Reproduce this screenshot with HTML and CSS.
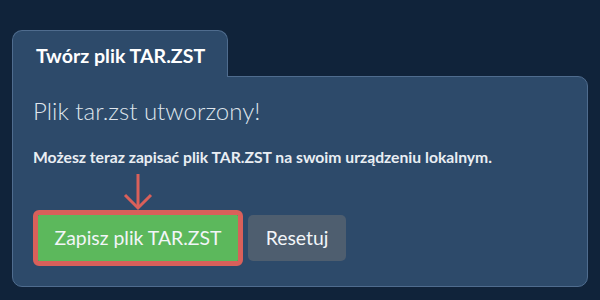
FILE: index.html
```html
<!DOCTYPE html>
<html lang="pl">
<head>
    <meta charset="UTF-8">
    <meta name="viewport" content="width=device-width, initial-scale=1.0">
    <title>Twórz plik TAR.ZST</title>
    <link rel="stylesheet" href="styles.css">
</head>
<body>
    <div class="tab">Twórz plik TAR.ZST</div>
    <div class="panel">
        <h2 class="panel-title">Plik tar.zst utworzony!</h2>
        <p class="panel-text">Możesz teraz zapisać plik TAR.ZST na swoim urządzeniu lokalnym.</p>
        <div class="button-row">
            <div class="highlight">
                <svg class="arrow" width="30" height="37" viewBox="0 0 30 37">
                    <line x1="15" y1="0" x2="15" y2="34" />
                    <polyline points="2,21 15,34 28,21" />
                </svg>
                <button class="btn btn-save">Zapisz plik TAR.ZST</button>
            </div>
            <button class="btn btn-reset">Resetuj</button>
        </div>
    </div>
</body>
</html>
```

FILE: styles.css
```css
body {
    margin: 0;
    padding: 30px 12px 0 12px;
    background-color: #10233a;
    font-family: Lato, "Noto Sans", sans-serif;
    color: #e6ebf1;
}
.tab {
    position: relative;
    z-index: 1;
    box-sizing: border-box;
    width: 216px;
    height: 47px;
    margin-bottom: -1px;
    padding: 13px 0 0 23px;
    background-color: #2d4a6a;
    border: 1px solid #4f6c8e;
    border-bottom: none;
    border-radius: 10px 10px 0 0;
    color: #ffffff;
    font-size: 19.6px;
    font-weight: bold;
    line-height: 1.2;
}
.panel {
    padding: 20px;
    background-color: #2d4a6a;
    border: 1px solid #4f6c8e;
    border-radius: 0 10px 10px 10px;
}
.panel-title {
    margin: 0 0 22px 0;
    font-size: 24px;
    font-weight: 300;
    line-height: 1.2;
    color: #dfe5ec;
}
.panel-text {
    margin: 0 0 43px 0;
    font-size: 15.7px;
    font-weight: bold;
    line-height: 1.2;
    color: #e9eef3;
}
.button-row {
    display: flex;
    align-items: center;
    gap: 5px;
}
.highlight {
    position: relative;
    display: flex;
    border: 5px solid #d9605a;
    border-radius: 6px;
}
.arrow {
    position: absolute;
    left: 50%;
    bottom: 100%;
    margin-left: -15px;
    margin-bottom: 4px;
    fill: none;
    stroke: #d9605a;
    stroke-width: 3;
}
.btn {
    height: 46px;
    padding: 0;
    border: none;
    font-family: Lato, "Noto Sans", sans-serif;
    font-size: 19.4px;
    white-space: nowrap;
    color: #f2f5f8;
}
.btn-save {
    width: 200px;
    background-color: #5cb85c;
    border-radius: 1px;
}
.btn-reset {
    width: 98px;
    background-color: #4e5e6f;
    border-radius: 5px;
}
```
